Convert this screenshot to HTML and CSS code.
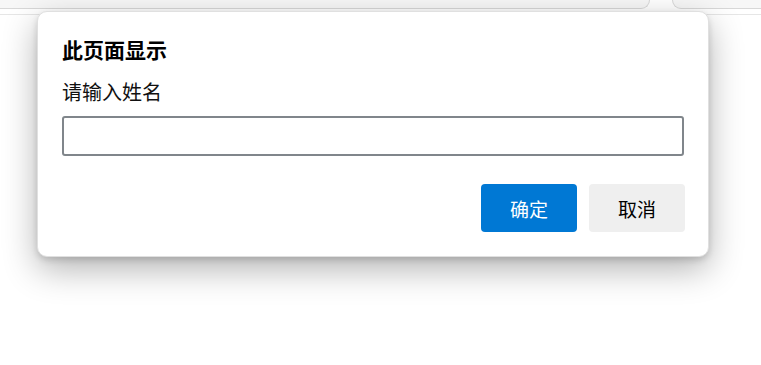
FILE: index.html
```html
<!DOCTYPE html>
<html lang="zh-CN">
<head>
<meta charset="utf-8">
<title>此页面显示</title>
<link rel="stylesheet" href="styles.css">
</head>
<body>
<div class="chrome">
  <div class="tab tab-left"></div>
  <div class="tab tab-right"></div>
</div>
<div class="rule"></div>
<div class="dialog" role="dialog">
  <div class="title">此页面显示</div>
  <div class="label">请输入姓名</div>
  <input class="field" type="text">
  <div class="actions">
    <button class="btn btn-primary">确定</button>
    <button class="btn btn-secondary">取消</button>
  </div>
</div>
</body>
</html>
```
FILE: styles.css
```css
html, body {
  margin: 0;
  padding: 0;
  background: #ffffff;
  font-family: "Noto Sans CJK SC", "Noto Sans", sans-serif;
}
body {
  position: relative;
  width: 761px;
  height: 365px;
  overflow: hidden;
}
.chrome {
  display: flex;
  gap: 22px;
  height: 9px;
  margin-left: -20px;
}
.tab {
  background: #f7f7f7;
  border: 1px solid #d8d8d8;
  border-top: none;
  border-radius: 0 0 12px 12px;
  box-sizing: border-box;
}
.tab-left {
  width: 670px;
}
.tab-right {
  flex: 1;
  margin-right: -20px;
}
.rule {
  margin-top: 5px;
  height: 1px;
  background: #e6e6e6;
}
.dialog {
  position: absolute;
  left: 37px;
  top: 11px;
  width: 672px;
  height: 246px;
  box-sizing: border-box;
  background: #ffffff;
  border: 1px solid #e0e0e0;
  border-radius: 10px;
  box-shadow: 0 12px 34px rgba(0, 0, 0, 0.3), 0 3px 6px rgba(0, 0, 0, 0.14);
  padding: 23px 24px 24px 24px;
  display: flex;
  flex-direction: column;
}
.title {
  font-size: 21px;
  font-weight: 700;
  color: #000000;
  line-height: 28px;
}
.label {
  margin-top: 16px;
  font-size: 20px;
  color: #111111;
  line-height: 26px;
}
.field {
  margin-top: 11px;
  height: 40px;
  box-sizing: border-box;
  width: 100%;
  border: 2px solid #80868b;
  border-radius: 3px;
  background: #fff;
  outline: none;
  font-size: 18px;
}
.actions {
  margin-top: 28px;
  margin-right: -1px;
  display: flex;
  justify-content: flex-end;
  gap: 12px;
}
.btn {
  width: 96px;
  height: 48px;
  border: none;
  border-radius: 4px;
  font-family: "Noto Sans CJK SC", "Noto Sans", sans-serif;
  font-size: 19px;
  padding: 0;
}
.btn-primary {
  background: #0078d4;
  color: #ffffff;
}
.btn-secondary {
  background: #efefef;
  color: #000000;
}
```
